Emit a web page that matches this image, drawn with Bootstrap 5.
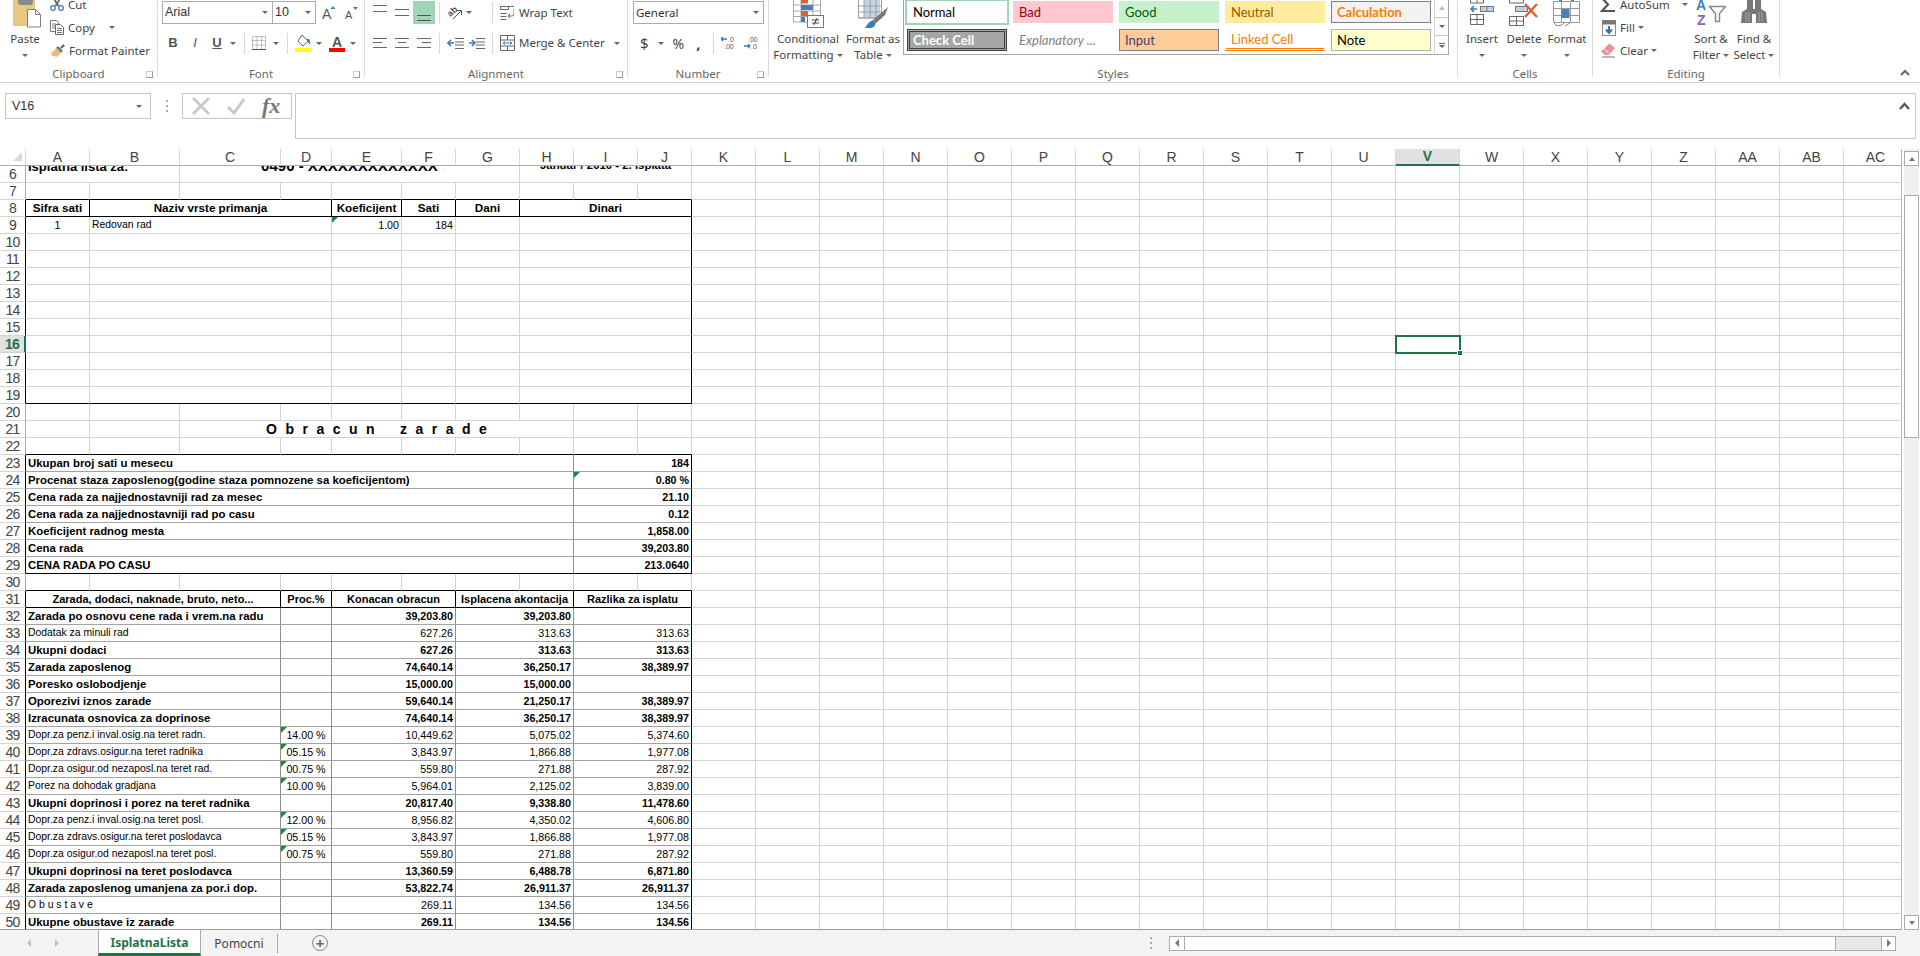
<!DOCTYPE html>
<html lang="sr">
<head>
<meta charset="UTF-8">
<meta name="viewport" content="width=device-width, initial-scale=1">
<title>IsplatnaLista - Excel</title>
<link href="https://cdn.jsdelivr.net/npm/bootstrap@5.3.2/dist/css/bootstrap.min.css" rel="stylesheet">
<script src="https://cdn.jsdelivr.net/npm/bootstrap@5.3.2/dist/js/bootstrap.bundle.min.js"></script>
<style>
html,body{height:100%;margin:0;overflow:hidden;background:#fff}
body{font-family:"Noto Sans",sans-serif;font-size:11.5px;color:#444}
.xl-app{height:956px;width:1920px}
svg{display:block;flex:none}
/* ribbon */
.rb{height:83px;border-bottom:1px solid #d4d4d4;overflow:hidden;flex:none}
.grp{height:77px;border-right:1px solid #dcdcdc;position:relative;flex:none}
.grp-body{height:67px}
.grp-name{position:absolute;left:0;right:0;top:67px;line-height:14px;text-align:center;color:#666}
.launch{position:absolute;right:4px;top:71px;width:7px;height:7px;border:1px solid #999;border-top-color:#ccc;border-left-color:#ccc}
.w-clip{width:158px}.w-font{width:207px}.w-align{width:263px}.w-num{width:141px}.w-sty{width:689px}.w-cell{width:135px}.w-edit{width:187px}
.car{display:inline-block;flex:none;width:0;height:0;border-left:3px solid transparent;border-right:3px solid transparent;border-top:3px solid #666}
.big-col{display:flex;flex-direction:column;align-items:center;text-align:center;line-height:16px;flex:none}
.big-col .ico{height:28px;display:flex;justify-content:center}
.big-col .lbl1{margin-top:3px}
.big-col>.car{margin-top:7px}
.stack3{margin-top:-7px;flex:none}
.stack3>div{height:23px;display:flex;align-items:center;white-space:nowrap}
.combo{height:23px;border:1px solid #ababab;background:#fff;display:flex;align-items:center;justify-content:space-between;padding:0 4px 0 2px;font-family:"Liberation Sans",sans-serif;font-size:12.5px;color:#333;flex:none}
.c-font{width:111px}.c-size{width:44px;margin-left:-1px}.c-num{width:131px;font-family:"Noto Sans",sans-serif;font-size:11.5px}
.tool-row{height:22px;display:flex;align-items:center;white-space:nowrap}
.tb{width:22px;text-align:center;font-family:"Liberation Sans",sans-serif;font-size:13px;color:#555;flex:none}
.vsep{width:1px;height:21px;background:#d8d8d8;flex:none}
.sel-tool{width:22px;height:23px;background:#9fd5b7;display:flex;align-items:flex-end;justify-content:center;flex:none}
.m2{margin-left:2px}.m3{margin-left:3px}.m4{margin-left:4px}.m5{margin-left:5px}.m6{margin-left:6px}.m7{margin-left:7px}.m8{margin-left:8px}.m9{margin-left:9px}.m20{margin-left:20px}
.gal{width:546px;height:56px;margin-top:-1px;border:1px solid #a6a6a6;border-top:0;display:flex;flex:none}
.gal-items{display:grid;grid-template-columns:repeat(5,100px);column-gap:6px;row-gap:6px;padding:2px 0 0 3px;grid-auto-rows:22px}
.sty{font-family:Lato,sans-serif;font-size:13px;line-height:20px;padding:0 5px;white-space:nowrap;border:1px solid transparent;color:#000}
.s-normal{background:#fff;outline:2px solid #9fd5b7;color:#000}
.s-bad{background:#ffc7ce;color:#9c0006}.s-good{background:#c6efce;color:#006100}.s-neutral{background:#ffeb9c;color:#9c5700}
.s-calc{background:#f2f2f2;border-color:#7f7f7f;color:#fa7d00;font-weight:700}
.s-check{background:#a5a5a5;border:3px double #3f3f3f;color:#fff;font-weight:700;line-height:16px;padding:0 3px}
.s-expl{color:#7f7f7f;font-style:italic}
.s-input{background:#fc9;border-color:#7f7f7f;color:#3f3f76}
.s-link{color:#fa7d00;border-bottom:3px double #fa7d00;line-height:19px}
.s-note{background:#ffc;border-color:#b2b2b2}
.gal-btns{margin-left:auto;width:14px;border-left:1px solid #d4d4d4;display:flex;flex-direction:column}
.gal-btns>div{flex:1;border-bottom:1px solid #c8c8c8;display:flex;align-items:center;justify-content:center;flex-direction:column;gap:1px}
.gal-btns>div:last-child{border-bottom:0}
.car-up{display:block;width:0;height:0;border-left:3px solid transparent;border-right:3px solid transparent;border-bottom:4px solid #bbb}
.bar{display:block;width:6px;height:1px;background:#666}
/* formula bar */
.fbar{height:66px;padding:10px 0 0 5px;flex:none;position:relative}
.namebox{width:146px;height:26px;border:1px solid #c6c6c6;display:flex;align-items:center;justify-content:space-between;padding:0 8px 0 6px;font-family:"Liberation Sans",sans-serif;font-size:12.5px;color:#333}
.dots{width:2px;height:12px;margin:0 14px 0 15px;background:repeating-linear-gradient(#aaa 0 2px,transparent 2px 5px)}
.fx-box{width:110px;height:26px;border:1px solid #c6c6c6;display:flex;align-items:center;padding-left:9px;gap:16px}
.fx-txt{font-family:"Liberation Serif",serif;font-style:italic;font-weight:700;font-size:22px;color:#777;line-height:22px}
.fx-in{margin-left:3px;width:1621px;height:46px;border:1px solid #c6c6c6;display:flex;justify-content:flex-end;padding:8px 5px 0 0}
/* sheet */
.sheet-wrap{height:781px;flex:none}
.grid-clip{width:1902px;height:781px;overflow:hidden;border-right:1px solid #b5b5b5;border-bottom:1px solid #9c9c9c;flex:none}
.xl-grid{border-collapse:separate;border-spacing:0;table-layout:fixed;width:1882px;font-family:"Liberation Sans",sans-serif;color:#000}
.xl-grid th,.xl-grid td{box-sizing:border-box;height:17px;padding:0 2px;border-right:1px solid #d4d4d4;border-bottom:1px solid #d4d4d4;overflow:hidden;white-space:nowrap;font-size:10.7px;line-height:16px;vertical-align:bottom;background:#fff}
.xl-grid thead th{font-weight:400;font-size:14px;color:#444;text-align:center;padding:0;border-bottom-color:#ababab;border-right-color:#d8d8d8;line-height:16px}
.xl-grid th.rn{font-weight:400;font-size:14px;letter-spacing:-.7px;color:#444;text-align:center;padding:0;border-right-color:#ababab;line-height:16px}
.xl-grid th.corner{position:relative}
.corner::after{content:"";position:absolute;left:13px;top:3px;border-left:9px solid transparent;border-bottom:9px solid #d9d9d9}
.xl-grid thead th.on{background:#e1e1e1;color:#217346;font-weight:700;border-bottom:2px solid #217346;line-height:15px}
.xl-grid th.rn.on{background:#e1e1e1;color:#217346;font-weight:700;border-right:2px solid #217346}
.xl-grid td.kb{border-bottom-color:#000}
.xl-grid td.kr,.xl-grid th.kr{border-right-color:#000}
.xl-grid td.gb{border-bottom-color:#a3a3a3}
.xl-grid td.gr{border-right-color:#8e8e8e}
.xl-grid td.lab{font-size:11.4px;font-weight:700;text-align:left}
.xl-grid td.lab-n{font-size:10.4px;text-align:left}
.xl-grid td.hd{font-size:11.7px;font-weight:700;text-align:center}
.xl-grid td.hd2{font-size:11px;font-weight:700;text-align:center}
.xl-grid td.num{text-align:right}
.xl-grid td.pct{text-align:center;font-size:10.7px}
.xl-grid td.fw-bold{font-weight:700}
.xl-grid td.tri{position:relative}
.tri::before{content:"";position:absolute;left:0;top:0;border-top:6px solid #1b8a3a;border-right:6px solid transparent}
.xl-grid td.title{font-size:14px;font-weight:700;text-align:center;word-spacing:4.6px}
.xl-grid td.clipc{vertical-align:top}
.high{display:block;line-height:17px;font-weight:700;margin-top:-9px}
.h-a{font-size:13px;margin-top:-8px}.h-b{font-size:15px;text-align:center}.h-c{font-size:11.4px;text-align:center}
.xl-grid td.cur{position:relative;overflow:visible}
.cursor{position:absolute;left:-1px;top:-1px;width:66px;height:19px;border:2px solid #217346}
.cursor::after{content:"";position:absolute;right:-4px;bottom:-4px;width:6px;height:6px;background:#217346;border:1px solid #fff}
/* scrollbars */
.vscroll{margin-left:2px;width:15px;height:781px;padding-top:2px;display:flex;flex-direction:column;flex:none;background:#f0f0f0}
.sbtn{flex:none;background:#fff;border:1px solid #ababab;display:flex;align-items:center;justify-content:center}
.sbtn-v{height:15px}
.v-track{height:29px;flex:none}
.v-thumb{height:243px;background:#fff;border:1px solid #ababab;flex:none}
.tabsbar{height:26px;background:#f3f3f3;flex:none}
.nav-arrow{width:0;height:0;border-top:4px solid transparent;border-bottom:4px solid transparent}
.tab-on{width:103px;height:26px;margin-top:-1px;background:#fff;border-left:1px solid #ababab;border-right:1px solid #ababab;border-bottom:3px solid #217346;color:#217346;font-weight:700;font-size:12px;text-align:center;line-height:25px;flex:none}
.tab-off{width:77px;height:19px;border-right:1px solid #ababab;color:#444;font-size:12px;line-height:19px;text-align:center;flex:none}
.addtab{width:16px;height:16px;border:1.5px solid #888;border-radius:50%;color:#666;flex:none;display:flex;align-items:center;justify-content:center;font-size:15px;line-height:1;font-weight:700;margin-left:34px}
.hscroll{height:15px;width:727px;margin-left:17px;background:#e8e8e8;display:flex;flex:none;border:1px solid #ababab}
.h-btn{width:14px;background:#fff;display:flex;align-items:center;justify-content:center;flex:none}
.h-thumb{width:652px;background:#fff;border-left:1px solid #ababab;border-right:1px solid #ababab;flex:none}
</style>
</head>
<body>
<div class="xl-app d-flex flex-column">

  <!-- ribbon -->
  <div class="rb d-flex">
    <div class="grp w-clip">
      <div class="grp-body d-flex">
        <div class="big-col" style="width:50px">
          <div class="ico"><svg width="32" height="28" viewBox="0 0 32 28"><path d="M4 0h22v26H4z" fill="#e8c783"/><path d="M9 0h15v3l-2 2H11L9 3z" fill="#8a8a8a"/><path d="M18.500 9.500h8l5 5v12.500h-13z" fill="#fff" stroke="#7f7f7f"/><path d="M26.500 9.500v5h5" fill="none" stroke="#7f7f7f"/></svg></div>
          <div class="lbl1">Paste</div>
          <span class="car"></span>
        </div>
        <div class="stack3">
          <div><svg width="14" height="14" viewBox="0 0 14 14"><path d="M3.500 0l5 8M10.500 0l-5 8" stroke="#666" stroke-width="1.800" fill="none"/><circle cx="3" cy="10" r="2.300" fill="none" stroke="#3f7cb8" stroke-width="1.300"/><circle cx="11" cy="10" r="2.300" fill="none" stroke="#3f7cb8" stroke-width="1.300"/></svg><span class="m4">Cut</span></div>
          <div><svg width="14" height="15" viewBox="0 0 14 15"><path d="M.5.500h6l2 2v9h-8z" fill="#fff" stroke="#777"/><path d="M2 4h4M2 6h3M2 8h3" stroke="#888"/><path d="M5.500 4.500h5l3 3v7h-8z" fill="#fff" stroke="#666"/><path d="M7 8.500h5M7 10.500h5M7 12.500h5" stroke="#4a7fb5"/></svg><span class="m4">Copy</span><span class="car" style="margin-left:14px"></span></div>
          <div><svg width="16" height="15" viewBox="0 0 16 15"><path d="M10 5l3-4 2 2-4 3z" fill="#666"/><path d="M8 3l5 5-2 2-5-5z" fill="#777"/><path d="M6 5l5 5-4 4-7-2 3-2-3-1 4-1z" fill="#e6bd7a"/></svg><span class="m3">Format Painter</span></div>
        </div>
      </div>
      <div class="grp-name">Clipboard</div><span class="launch"></span>
    </div>

    <div class="grp w-font">
      <div class="grp-body" style="padding:1px 0 0 4px">
        <div class="d-flex align-items-center">
          <div class="combo c-font"><span>Arial</span><span class="car"></span></div>
          <div class="combo c-size"><span>10</span><span class="car"></span></div>
          <svg class="m6" width="14" height="14" viewBox="0 0 14 14"><text x="0" y="13" font-family="Liberation Sans" font-size="14" fill="#555">A</text><path d="M8.500 3l2.500-3 2.500 3z" fill="#3f7cb8"/></svg>
          <svg class="m9" width="13" height="14" viewBox="0 0 13 14"><text x="0" y="13" font-family="Liberation Sans" font-size="11" fill="#555">A</text><path d="M8 1h5l-2.500 3z" fill="#3f7cb8"/></svg>
        </div>
        <div class="tool-row" style="margin-top:8px">
          <span class="tb fw-bold">B</span><span class="tb fst-italic">I</span><span class="tb fw-bold text-decoration-underline">U</span>
          <span class="car m2"></span><span class="vsep m8"></span>
          <svg class="m7" width="14" height="14" viewBox="0 0 14 14"><path d="M.5.500h13v13H.5zM.5 4.500h13M.5 9h13M5 .500v13M9.500 .500v13" fill="none" stroke="#888" stroke-dasharray="1 1"/><path d="M0 13.500h14" stroke="#555"/></svg>
          <span class="car m7"></span><span class="vsep m8"></span>
          <svg class="m7" width="17" height="17" viewBox="0 0 17 17"><path d="M7 0l6 6-5 5-5-5z" fill="#fff" stroke="#666"/><path d="M11 4h3q2 2 1 5-2 0-2-3" fill="#3f7cb8"/><rect y="13" width="16" height="4" fill="#ff0"/></svg>
          <span class="car" style="margin-left:4px"></span>
          <svg class="m7" width="16" height="17" viewBox="0 0 16 17"><text x="3" y="12" font-family="Liberation Sans" font-weight="700" font-size="14" fill="#555">A</text><rect y="13" width="16" height="4" fill="#f00"/></svg>
          <span class="car m5"></span>
        </div>
      </div>
      <div class="grp-name">Font</div><span class="launch"></span>
    </div>

    <div class="grp w-align">
      <div class="grp-body" style="padding:1px 0 0 8px">
        <div class="tool-row" style="height:23px">
          <svg width="14" height="22" viewBox="0 0 14 22"><path d="M0 3.500h14M0 9.500h14" stroke="#666" stroke-width="1.200"/></svg>
          <svg class="m8" width="14" height="22" viewBox="0 0 14 22"><path d="M0 7.500h14M0 13.500h14" stroke="#666" stroke-width="1.200"/></svg>
          <div class="sel-tool m4"><svg width="14" height="22" viewBox="0 0 14 22"><path d="M0 13.500h14M0 18.500h14" stroke="#555" stroke-width="1.200"/></svg></div>
          <span class="vsep m4"></span>
          <svg class="m7" width="16" height="16" viewBox="0 0 16 16"><text x="1" y="10" font-family="Liberation Sans" font-size="9" font-weight="700" fill="#555" transform="rotate(-45 5 8)">ab</text><path d="M6 14l8-8M10 5.500h4.500V10" fill="none" stroke="#555"/></svg>
          <span class="car m3"></span><span class="vsep m20"></span>
          <svg class="m7" width="14" height="16" viewBox="0 0 14 16"><path d="M.5 1.500h8v3h-8zM.5 8.500h6M.5 11.500h6M.5 14.500h6" fill="none" stroke="#666"/><path d="M8 1.500h6M14 4v5q0 2-2 2H8m2-2l-2 2 2 2" fill="none" stroke="#3f7cb8"/></svg>
          <span class="m5">Wrap Text</span>
        </div>
        <div class="tool-row" style="margin-top:8px">
          <svg width="14" height="12" viewBox="0 0 14 12"><path d="M0 1.500h14M0 5.500h9M0 10.500h14" stroke="#666" stroke-width="1.200"/></svg>
          <svg class="m8" width="14" height="12" viewBox="0 0 14 12"><path d="M0 1.500h14M3 5.500h8M0 10.500h14" stroke="#666" stroke-width="1.200"/></svg>
          <svg class="m8" width="14" height="12" viewBox="0 0 14 12"><path d="M0 1.500h14M5 5.500h9M0 10.500h14" stroke="#666" stroke-width="1.200"/></svg>
          <span class="vsep m8"></span>
          <svg class="m7" width="17" height="12" viewBox="0 0 17 12"><path d="M8 1.500h9M8 5h9M8 8h9M8 11.500h9" stroke="#666"/><path d="M7 6H1m3-3L1 6l3 3" fill="none" stroke="#3f7cb8" stroke-width="1.600"/></svg>
          <svg class="m5" width="16" height="12" viewBox="0 0 16 12"><path d="M7 1.500h9M7 5h9M7 8h9M7 11.500h9" stroke="#666"/><path d="M0 6h6M3 3l3 3-3 3" fill="none" stroke="#3f7cb8" stroke-width="1.600"/></svg>
          <span class="vsep m7"></span>
          <svg class="m7" width="15" height="16" viewBox="0 0 15 16"><path d="M.5.500h14v15H.5zM.5 5h14M.5 11h14M7.500 .500V5M7.500 11v4.500" fill="none" stroke="#666"/><path d="M3 8h9M5 6.500L3 8l2 1.500M10 6.500L12 8l-2 1.500" fill="none" stroke="#3f7cb8"/></svg>
          <span class="m4">Merge &amp; Center</span><span class="car m9"></span>
        </div>
      </div>
      <div class="grp-name">Alignment</div><span class="launch"></span>
    </div>

    <div class="grp w-num">
      <div class="grp-body" style="padding:1px 0 0 5px">
        <div class="combo c-num"><span>General</span><span class="car"></span></div>
        <div class="tool-row" style="margin-top:8px">
          <span class="m7" style="font-size:15px">$</span><span class="car m9"></span>
          <span class="m9" style="font-size:14px">%</span>
          <span class="fw-bold" style="font-size:15px;margin-left:12px">,</span>
          <span class="vsep" style="margin-left:12px"></span>
          <svg class="m7" width="15" height="14" viewBox="0 0 15 14"><path d="M6 3H0m2-2L0 3l2 2" fill="none" stroke="#3f7cb8" stroke-width="1.300"/><text x="7" y="6" font-size="7" font-family="Liberation Sans" fill="#555">.0</text><text x="3" y="13" font-size="7" font-family="Liberation Sans" fill="#555">.00</text></svg>
          <svg class="m8" width="15" height="14" viewBox="0 0 15 14"><text x="4" y="6" font-size="7" font-family="Liberation Sans" fill="#555">.00</text><path d="M0 10h6M4 8l2 2-2 2" fill="none" stroke="#3f7cb8" stroke-width="1.300"/><text x="7" y="13" font-size="7" font-family="Liberation Sans" fill="#555">.0</text></svg>
        </div>
      </div>
      <div class="grp-name">Number</div><span class="launch"></span>
    </div>

    <div class="grp w-sty">
      <div class="grp-body d-flex" style="padding-left:4px">
        <div class="big-col" style="width:70px">
          <div class="ico"><svg width="31" height="28" viewBox="0 0 31 28"><path d="M.5 0v22h27V0M8 0v22M20 0v22M.5 5h27M.5 11h27M.5 16.500h27" fill="none" stroke="#a8a8a8"/><rect x="8" y="0" width="7" height="3.500" fill="#d9623b"/><rect x="8" y="5" width="12" height="5" fill="#4a7fb5"/><rect x="8" y="11" width="7" height="5" fill="#d9623b"/><rect x="8" y="17" width="4" height="5" fill="#4a7fb5"/><rect x="14.500" y="15.500" width="16" height="12" fill="#fff" stroke="#777"/><path d="M19 20h7M19 23h7M24 18l-3 7" stroke="#444" fill="none"/></svg></div>
          <div class="lbl1">Conditional</div><div>Formatting <span class="car align-middle"></span></div>
        </div>
        <div class="big-col" style="width:60px">
          <div class="ico"><svg width="30" height="28" viewBox="0 0 30 28"><rect x="6" y="0" width="16" height="18" fill="#c5d5e8"/><path d="M.5 0v18h23V0M6 0v18M12 0v18M18 0v18M.5 6h23M.5 12h23M.5 18h23" stroke="#a0a0a0" fill="none"/><path d="M30 7L15 20l3 3 9-8z" fill="#777"/><path d="M15 20q-4 1-8 8 9 2 11-5z" fill="#3f7cb8"/></svg></div>
          <div class="lbl1">Format as</div><div>Table <span class="car align-middle"></span></div>
        </div>
        <div class="gal">
          <div class="gal-items">
            <div class="sty s-normal">Normal</div><div class="sty s-bad">Bad</div><div class="sty s-good">Good</div><div class="sty s-neutral">Neutral</div><div class="sty s-calc">Calculation</div>
            <div class="sty s-check">Check Cell</div><div class="sty s-expl">Explanatory ...</div><div class="sty s-input">Input</div><div class="sty s-link">Linked Cell</div><div class="sty s-note">Note</div>
          </div>
          <div class="gal-btns">
            <div><span class="car-up"></span></div>
            <div><span class="car"></span></div>
            <div><span class="bar"></span><span class="car"></span></div>
          </div>
        </div>
      </div>
      <div class="grp-name">Styles</div>
    </div>

    <div class="grp w-cell">
      <div class="grp-body d-flex" style="padding-left:3px">
        <div class="big-col" style="width:42px">
          <div class="ico"><svg width="26" height="26" viewBox="0 0 26 26"><path d="M1.500 0v3h13V0M8 0v3M1.500 14.500h13v10h-13zM1.500 19.500h13M8 14.500v10" fill="none" stroke="#666"/><path d="M8 9H2m3-3L2 9l3 3" fill="none" stroke="#3f7cb8" stroke-width="1.600"/><rect x="11.500" y="6.500" width="13" height="5" fill="#bcd0e6" stroke="#777"/><path d="M18 6.500v5" stroke="#777"/></svg></div>
          <div class="lbl1">Insert</div><span class="car"></span>
        </div>
        <div class="big-col" style="width:42px">
          <div class="ico"><svg width="30" height="26" viewBox="0 0 30 26"><path d="M.5 0v3h14V0M.5 16.500h14v9H.5zM.5 21h14M7.500 16.500v9" fill="none" stroke="#666"/><rect x="6.500" y="6.500" width="12" height="5" fill="#bcd0e6" stroke="#777"/><path d="M16 4l12 13M28 4L16 17" stroke="#d9623b" stroke-width="2.400"/></svg></div>
          <div class="lbl1">Delete</div><span class="car"></span>
        </div>
        <div class="big-col" style="width:44px">
          <div class="ico"><svg width="28" height="28" viewBox="0 0 28 28"><path d="M.5 1.500h26v21H.5zM.5 8.500h26M.5 15.500h26M8.500 1.500v21M17.500 1.500v21" fill="none" stroke="#999"/><rect x="8.500" y="9" width="8" height="9" fill="#4a7fb5"/><path d="M6 0h3M18 0h3" stroke="#3f7cb8" stroke-width="2"/><path d="M1 23l3 3 5-1 2-2M12 26l5-3" fill="none" stroke="#888"/></svg></div>
          <div class="lbl1">Format</div><span class="car"></span>
        </div>
      </div>
      <div class="grp-name">Cells</div>
    </div>

    <div class="grp w-edit">
      <div class="grp-body d-flex" style="padding-left:7px">
        <div class="stack3" style="width:90px">
          <div><svg width="16" height="15" viewBox="0 0 16 15"><path d="M15 1H2l6 6.500L2 14h13" fill="none" stroke="#555" stroke-width="2.200"/></svg><span class="m4">AutoSum</span><span class="car" style="margin-left:12px"></span></div>
          <div><svg width="16" height="16" viewBox="0 0 16 16"><rect x="2.500" y=".5" width="13" height="15" fill="#fff" stroke="#888"/><rect x="2.500" y=".5" width="13" height="4" fill="#777"/><path d="M9 6v7M6 9.500l3 3.500 3-3.500" fill="none" stroke="#2f74b5" stroke-width="2"/></svg><span class="m4">Fill</span><span class="car m3"></span></div>
          <div><svg width="16" height="15" viewBox="0 0 16 15"><path d="M9.500 .5l5.500 4.500-6 7H5L1 8.500z" fill="#ea8f9c"/><path d="M4 5.500l5 5" stroke="#fff"/><path d="M2 14h13" stroke="#777"/></svg><span class="m4">Clear</span><span class="car m3"></span></div>
        </div>
        <div class="big-col" style="width:42px">
          <div class="ico"><svg width="30" height="28" viewBox="0 0 30 28"><text x="0" y="10" font-family="Liberation Sans" font-weight="700" font-size="14" fill="#3f7cb8">A</text><text x="1" y="25" font-family="Liberation Sans" font-weight="700" font-size="14" fill="#8e5db5">Z</text><path d="M13.500 6.500h16l-6 7v8h-4v-8z" fill="#fff" stroke="#888" stroke-width="1.500"/></svg></div>
          <div class="lbl1">Sort &amp;</div><div>Filter <span class="car align-middle"></span></div>
        </div>
        <div class="big-col" style="width:44px">
          <div class="ico"><svg width="26" height="24" viewBox="0 0 26 24"><path d="M6 0h6v9h2V0h6v9l5 3 1 11H15v-9h-4v9H0l1-11 5-3z" fill="#777"/><path d="M5 12v10M8 12v10M18 12v10M21 12v10" stroke="#aaa"/></svg></div>
          <div class="lbl1">Find &amp;</div><div>Select <span class="car align-middle"></span></div>
        </div>
      </div>
      <div class="grp-name">Editing</div>
    </div>

    <div class="flex-grow-1 d-flex justify-content-end" style="padding:69px 10px 0 0">
      <svg width="10" height="7" viewBox="0 0 10 7"><path d="M1 6l4-4 4 4" fill="none" stroke="#666" stroke-width="2"/></svg>
    </div>
  </div>

  <!-- formula bar -->
  <div class="fbar d-flex align-items-start">
    <div class="namebox"><span>V16</span><span class="car"></span></div>
    <div class="dots" style="margin-top:7px"></div>
    <div class="fx-box">
      <svg width="18" height="18" viewBox="0 0 18 18"><path d="M1 1l16 16M17 1L1 17" stroke="#c8c8c8" stroke-width="2.800"/></svg>
      <svg width="20" height="18" viewBox="0 0 20 18"><path d="M2 10l6 6L18 2" fill="none" stroke="#c8c8c8" stroke-width="3"/></svg>
      <span class="fx-txt">fx</span>
    </div>
    <div class="fx-in"><svg width="11" height="8" viewBox="0 0 11 8"><path d="M1 7l4.500-5L10 7" fill="none" stroke="#555" stroke-width="2.400"/></svg></div>
  </div>

  <!-- sheet -->
  <div class="sheet-wrap d-flex">
    <div class="grid-clip"><table class="xl-grid" id="sheet"></table></div>
    <div class="vscroll">
      <div class="sbtn sbtn-v"><span class="car-up" style="border-bottom-color:#777"></span></div>
      <div class="v-track"></div>
      <div class="v-thumb"></div>
      <div class="flex-grow-1"></div>
      <div class="sbtn sbtn-v"><span class="car" style="border-top:4px solid #777"></span></div>
    </div>
  </div>

  <!-- tabs -->
  <div class="tabsbar d-flex align-items-center">
    <span class="nav-arrow" style="margin-left:27px;border-right:4px solid #c0c0c0"></span>
    <span class="nav-arrow" style="margin-left:24px;border-left:4px solid #c0c0c0"></span>
    <div class="tab-on" style="margin-left:39px">IsplatnaLista</div>
    <div class="tab-off">Pomocni</div>
    <div class="addtab">+</div>
    <div class="dots" style="margin:0 0 0 822px"></div>
    <div class="hscroll">
      <div class="h-btn"><span class="nav-arrow" style="border-right:4px solid #777"></span></div>
      <div class="h-thumb"></div>
      <div class="flex-grow-1"></div>
      <div class="h-btn" style="border-left:1px solid #ababab"><span class="nav-arrow" style="border-left:4px solid #777"></span></div>
    </div>
  </div>
</div>

<script>
// kolone sheet-a: naziv i sirina
const kolone = [['A',64],['B',90],['C',101],['D',51],['E',70],['F',54],['G',64],['H',54],['I',64],['J',54]];
'K L M N O P Q R S T U V W X Y Z AA AB AC'.split(' ').forEach(k => kolone.push([k,64]));
const UKUPNO = kolone.length;

// cell = [colspan, tekst, klase]
function red(n, celije, rnKlasa) {
    let kol = 0, html = `<tr><th class="rn ${rnKlasa||''} ${n==16?'on':''}">${n}</th>`;
    celije.forEach(c => {
        html += `<td colspan="${c[0]}" class="${c[2]||''}">${c[1]||''}</td>`;
        kol += c[0];
    });
    for (; kol < UKUPNO; kol++) {
        html += (n==16 && kolone[kol][0]=='V') ? '<td class="cur"><div class="cursor"></div></td>' : '<td></td>';
    }
    return html + '</tr>';
}
const prazne = (k) => Array.from({length:10}, () => [1,'',k||'']);

let h = '<colgroup><col style="width:26px">' + kolone.map(k => `<col style="width:${k[1]}px">`).join('') + '</colgroup>';
h += '<thead><tr><th class="corner"></th>' + kolone.map(k => `<th class="${k[0]=='V'?'on':''}">${k[0]}</th>`).join('') + '</tr></thead><tbody>';

// red 6 je skrolovan, vidi se samo donji deo teksta
h += red(6, [[2,'<span class="high h-a">Isplatna lista za:</span>','clipc'],[5,'<span class="high h-b">0490 - XXXXXXXXXXXXX</span>','clipc'],[3,'<span class="high h-c">Januar / 2010 - 2. isplata</span>','clipc']]);
h += red(7, prazne('kb'));
h += red(8, [[1,'Sifra sati','hd kb kr'],[3,'Naziv vrste primanja','hd kb kr'],[1,'Koeficijent','hd kb kr'],[1,'Sati','hd kb kr'],[1,'Dani','hd kb kr'],[3,'Dinari','hd kb kr']], 'kr');
h += red(9, [[1,'1','pct'],[3,'Redovan rad','lab-n'],[1,'1.00','num tri'],[1,'184','num'],[1],[3,'','kr']], 'kr');
for (let n = 10; n <= 19; n++) {
    const k = n == 19 ? 'kb' : '';
    h += red(n, [[1,'',k],[3,'',k],[1,'',k],[1,'',k],[1,'',k],[3,'',k+' kr']], 'kr');
}
h += red(20, prazne());
h += red(21, [[1],[1],[6,'O b r a c u n &nbsp; z a r a d e','title'],[1],[1]]);
h += red(22, prazne('kb'));

[['Ukupan broj sati u mesecu','184'],
 ['Procenat staza zaposlenog(godine staza pomnozene sa koeficijentom)','0.80 %','tri'],
 ['Cena rada za najjednostavniji rad za mesec','21.10'],
 ['Cena rada za najjednostavniji rad po casu','0.12'],
 ['Koeficijent radnog mesta','1,858.00'],
 ['Cena rada','39,203.80'],
 ['CENA RADA PO CASU','213.0640']].forEach((r,i) => {
    const k = i == 6 ? 'kb' : 'gb';
    h += red(23+i, [[8,r[0],'lab gr '+k],[2,r[1],'num fw-bold kr '+k+' '+(r[2]||'')]], 'kr');
});
h += red(30, prazne('kb'));
h += red(31, [[3,'Zarada, dodaci, naknade, bruto, neto...','hd2 kb kr'],[1,'Proc.%','hd2 kb kr'],[2,'Konacan obracun','hd2 kb kr'],[2,'Isplacena akontacija','hd2 kb kr'],[2,'Razlika za isplatu','hd2 kb kr']], 'kr');

// b = bold red
[['b','Zarada po osnovu cene rada i vrem.na radu','','39,203.80','39,203.80',''],
 ['','Dodatak za minuli rad','','627.26','313.63','313.63'],
 ['b','Ukupni dodaci','','627.26','313.63','313.63'],
 ['b','Zarada zaposlenog','','74,640.14','36,250.17','38,389.97'],
 ['b','Poresko oslobodjenje','','15,000.00','15,000.00',''],
 ['b','Oporezivi iznos zarade','','59,640.14','21,250.17','38,389.97'],
 ['b','Izracunata osnovica za doprinose','','74,640.14','36,250.17','38,389.97'],
 ['','Dopr.za penz.i inval.osig.na teret radn.','14.00 %','10,449.62','5,075.02','5,374.60'],
 ['','Dopr.za zdravs.osigur.na teret radnika','05.15 %','3,843.97','1,866.88','1,977.08'],
 ['','Dopr.za osigur.od nezaposl.na teret rad.','00.75 %','559.80','271.88','287.92'],
 ['','Porez na dohodak gradjana','10.00 %','5,964.01','2,125.02','3,839.00'],
 ['b','Ukupni doprinosi i porez na teret radnika','','20,817.40','9,338.80','11,478.60'],
 ['','Dopr.za penz.i inval.osig.na teret posl.','12.00 %','8,956.82','4,350.02','4,606.80'],
 ['','Dopr.za zdravs.osigur.na teret poslodavca','05.15 %','3,843.97','1,866.88','1,977.08'],
 ['','Dopr.za osigur.od nezaposl.na teret posl.','00.75 %','559.80','271.88','287.92'],
 ['b','Ukupni doprinosi na teret poslodavca','','13,360.59','6,488.78','6,871.80'],
 ['b','Zarada zaposlenog umanjena za por.i dop.','','53,822.74','26,911.37','26,911.37'],
 ['','O b u s t a v e','','269.11','134.56','134.56'],
 ['b','Ukupne obustave iz zarade','','269.11','134.56','134.56']].forEach((r,i) => {
    const bold = r[0] == 'b' ? 'fw-bold ' : '';
    h += red(32+i, [
        [3, r[1], (r[0]=='b'?'lab':'lab-n')+' gb gr'],
        [1, r[2], 'pct gb gr'+(r[2]?' tri':'')],
        [2, r[3], bold+'num gb gr'],
        [2, r[4], bold+'num gb gr'],
        [2, r[5], bold+'num gb kr']
    ], 'kr');
});
document.getElementById('sheet').innerHTML = h + '</tbody>';
</script>
</body>
</html>
